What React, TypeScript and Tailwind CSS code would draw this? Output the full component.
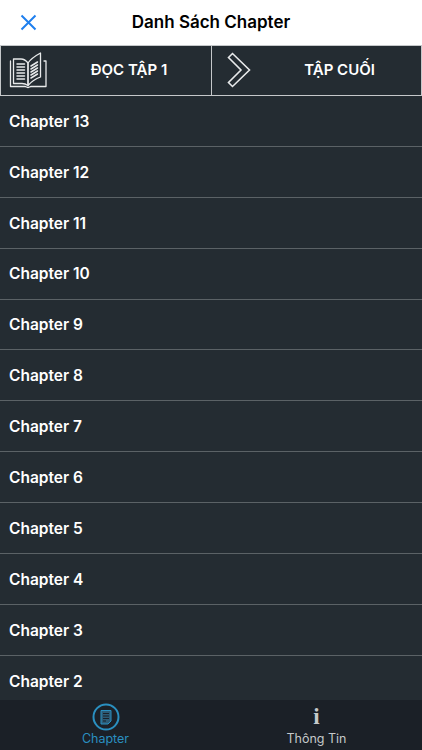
const chapters = [13, 12, 11, 10, 9, 8, 7, 6, 5, 4, 3, 2];

function BookIcon() {
  return (
    <svg width="38" height="38" viewBox="0 0 38 38" fill="none" stroke="#e8eaeb" strokeWidth="1.300" strokeLinejoin="round" strokeLinecap="round">
      <path d="M1.500 9v25.500h14.500c1 0 2 1 3 1s2-1 3-1h15V9h-2" />
      <path d="M4.500 7v24.500h8.500c2 0 4 .6 6 2V11c-2-2.600-4-4-7-4z" />
      <path d="M19 11c2-3 7-7 12.500-10V25c-5.500 2-9.500 5-12.500 8.500z" />
      <path d="M8 12h7.500M8 15h7.500M8 18h7.500M8 21h7.500M8 24h7.500M8 27h7.500" strokeWidth="1.500" />
      <path d="M22 14l6.500-4M22 17l6.500-4M22 20l6.500-4M22 23l6.500-4M22 26l6.500-4" strokeWidth="1.500" />
    </svg>
  );
}

function ChevronIcon() {
  return (
    <svg width="24" height="36" viewBox="0 0 24 36" fill="none" stroke="#e8eaeb" strokeWidth="1.600" strokeLinejoin="miter">
      <path d="M1.500 5.500 5.500 1.500 22.500 18 5.500 34.500 1.500 30.500 14 18z" />
    </svg>
  );
}

function ChapterIcon() {
  return (
    <svg width="28" height="28" viewBox="0 0 28 28" fill="none" stroke="#2a8fc0">
      <circle cx="14" cy="14" r="12.500" strokeWidth="2" />
      <path d="M9 7.500h10v10.500l-3 3H9z" fill="#2c5b75" strokeWidth="1" />
      <path d="M11 10.500h6M11 13h6M11 15.500h6M11 18h3" strokeWidth="1" stroke="#1b2027" />
    </svg>
  );
}

export default function App() {
  return (
    <div className="flex h-[750px] w-[422px] flex-col overflow-hidden bg-[#242c32] font-['Inter','Liberation_Sans',sans-serif]">
      <header className="relative flex h-[45px] shrink-0 items-center justify-center bg-white pt-[1px]">
        <svg className="absolute left-[20px] top-[14px]" width="17" height="17" viewBox="0 0 17 17" fill="none" stroke="#1f7fee" strokeWidth="2">
          <path d="M1.500 1.500l14 14M15.500 1.500l-14 14" />
        </svg>
        <h1 className="text-[17px] font-semibold text-black">Danh Sách Chapter</h1>
      </header>

      <div className="grid h-[51px] shrink-0 grid-cols-2 border border-[#c5c8ca]">
        <button type="button" className="relative flex items-center justify-center pl-[46px] text-[15px] font-semibold text-white">
          <span className="absolute left-[8px] top-[6px]"><BookIcon /></span>
          ĐỌC TẬP 1
        </button>
        <button type="button" className="relative flex items-center justify-center border-l border-[#c5c8ca] pl-[46px] text-[15px] font-semibold text-white">
          <span className="absolute left-[15px] top-[6px]"><ChevronIcon /></span>
          TẬP CUỐI
        </button>
      </div>

      <ul className="min-h-0 flex-1 overflow-hidden">
        {chapters.map((n) => (
          <li key={n} className="flex h-[50.9px] items-center border-b border-[#5b6266] pl-[9px] pt-[1px] text-[15.5px] font-semibold text-white">
            Chapter {n}
          </li>
        ))}
      </ul>

      <nav className="grid h-[50px] shrink-0 grid-cols-2 bg-[#1b2027]">
        <div className="flex flex-col items-center pt-[3px] text-[#2a8fc0]">
          <ChapterIcon />
          <span className="text-[12.5px] leading-[15px]">Chapter</span>
        </div>
        <div className="flex flex-col items-center pt-[3px] text-[#c5c8ca]">
          <span className="flex h-[28px] items-center font-['Liberation_Serif',serif] text-[23px] font-bold">i</span>
          <span className="text-[12.5px] leading-[15px]">Thông Tin</span>
        </div>
      </nav>
    </div>
  );
}
